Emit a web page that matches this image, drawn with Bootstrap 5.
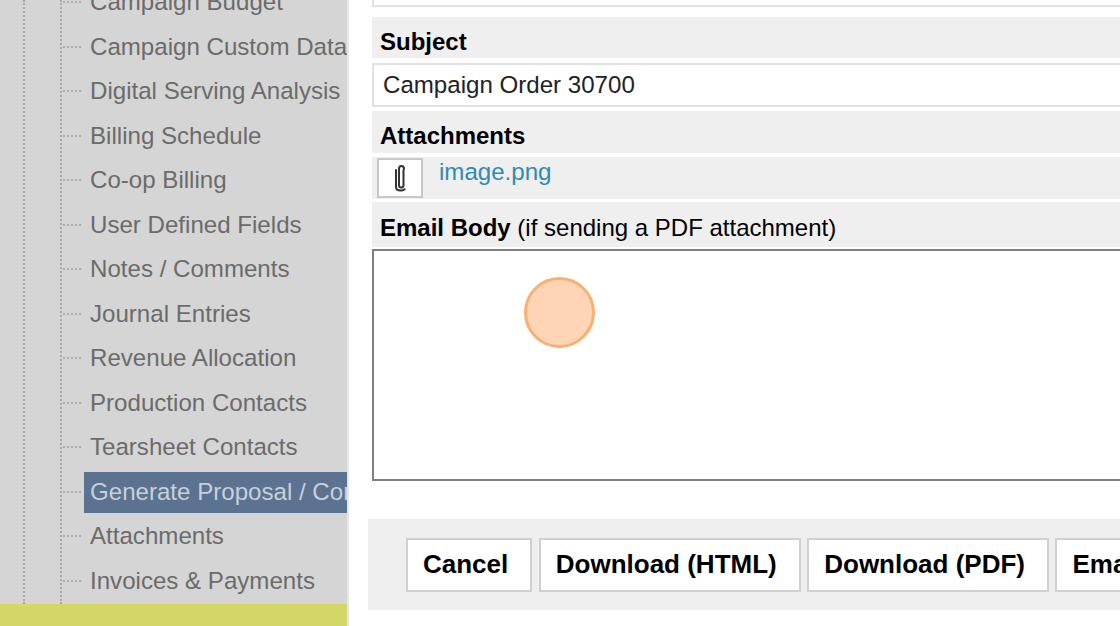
<!DOCTYPE html>
<html lang="en">
<head>
    <meta charset="UTF-8">
    <meta name="viewport" content="width=device-width, initial-scale=1.0">
    <title>Generate Proposal</title>
    <link href="https://cdn.jsdelivr.net/npm/bootstrap@5.3.2/dist/css/bootstrap.min.css" rel="stylesheet">
    <style>
        html, body { height: 626px; overflow: hidden; }
        body { font-family: "Liberation Sans", Arial, sans-serif; color: #222; background: #fff; }
        .page-wrap { width: 1120px; height: 626px; overflow: hidden; }
        .side-pane { width: 349px; flex: none; height: 626px; background: #d5d5d5; border-right: 2px solid #e6e6e6; overflow: hidden; }
        .tree-area { height: 604px; overflow: hidden; position: relative; }
        .tree-area::before, .tree-area::after { content: ""; position: absolute; top: 0; bottom: 0; border-left: 2px dotted #a8a8a8; }
        .tree-area::before { left: 23px; }
        .tree-area::after { left: 60px; }
        .tree-list { list-style: none; margin: -20px 0 0; padding: 0 0 0 84px; }
        .tree-item { height: 44.5px; position: relative; font-size: 24.1px; line-height: 44.5px; color: #6b6b6b; padding-left: 6px; white-space: nowrap; }
        .tree-item::before { content: ""; position: absolute; left: -21px; top: 21px; width: 18px; border-top: 2px dotted #adadad; }
        .tree-text { display: block; overflow: hidden; }
        .tree-item.is-active { color: #c7d0dc; padding-top: 2px; }
        .tree-item.is-active .tree-text { background: #5b7290; margin-left: -6px; padding-left: 6px; height: 41px; line-height: 39px; }
        .foot-strip { height: 22px; background: #d4d668; }
        .main-pane { padding-left: 19px; min-width: 0; position: relative; }
        .form-col { width: 900px; margin-left: 4px; margin-top: -38px; }
        .top-field { height: 45px; border: 2px solid #e2e2e2; background: #fff; }
        .label-bar { background: #efefef; color: #000; font-size: 24px; padding-left: 8px; line-height: 1; display: flex; align-items: center; }
        .label-bar b { font-weight: 700; }
        .bar-subject { height: 41px; margin-top: 10px; padding-top: 9px; }
        .bar-attach { height: 42px; margin-top: 4px; padding-top: 8px; }
        .bar-body { height: 45px; margin-top: 3px; padding-top: 6px; }
        .text-field { height: 44px; margin-top: 5px; border: 2px solid #e2e2e2; font-size: 24.1px; line-height: 40px; padding-left: 9px; color: #222; }
        .attach-row { height: 42px; margin-top: 4px; background: #efefef; padding: 1px 0 0 5px; }
        .clip-box { width: 46px; height: 40px; background: #fff; border: 2px solid #c8c8c8; padding-left: 2px; }
        .attach-link { font-size: 24.1px; line-height: 28px; color: #2f8ab8; margin-left: 16px; text-decoration: none; }
        .body-field { height: 232px; margin-top: 2px; border: 2px solid #7f7f7f; background: #fff; }
        .action-bar { margin-top: 38px; margin-left: -4px; width: 760px; height: 91px; background: #efefef; padding: 19px 0 0 38px; overflow: hidden; gap: 6.5px; }
        .act-btn { height: 54px; flex: none; background: #fff; border: 2px solid #d0d0d0; border-radius: 0; color: #000; font-size: 26px; font-weight: 700; padding: 0 22px 2px 15px; line-height: 48px; }
        .click-dot { position: absolute; left: 174.500px; top: 276.500px; width: 71px; height: 71px; border-radius: 50%; background: #ffd5b5; border: 3px solid #f8b073; }
    </style>
</head>
<body>
<div class="page-wrap d-flex">
    <aside class="side-pane d-flex flex-column">
        <div class="tree-area">
            <ul class="tree-list">
                <li class="tree-item"><span class="tree-text">Campaign Budget</span></li>
                <li class="tree-item"><span class="tree-text">Campaign Custom Data</span></li>
                <li class="tree-item"><span class="tree-text">Digital Serving Analysis</span></li>
                <li class="tree-item"><span class="tree-text">Billing Schedule</span></li>
                <li class="tree-item"><span class="tree-text">Co-op Billing</span></li>
                <li class="tree-item"><span class="tree-text">User Defined Fields</span></li>
                <li class="tree-item"><span class="tree-text">Notes / Comments</span></li>
                <li class="tree-item"><span class="tree-text">Journal Entries</span></li>
                <li class="tree-item"><span class="tree-text">Revenue Allocation</span></li>
                <li class="tree-item"><span class="tree-text">Production Contacts</span></li>
                <li class="tree-item"><span class="tree-text">Tearsheet Contacts</span></li>
                <li class="tree-item is-active"><span class="tree-text">Generate Proposal / Contract</span></li>
                <li class="tree-item"><span class="tree-text">Attachments</span></li>
                <li class="tree-item"><span class="tree-text">Invoices &amp; Payments</span></li>
            </ul>
        </div>
        <div class="foot-strip"></div>
    </aside>
    <main class="main-pane flex-grow-1">
        <div class="form-col">
            <div class="top-field"></div>
            <div class="label-bar bar-subject"><b>Subject</b></div>
            <div class="text-field">Campaign Order 30700</div>
            <div class="label-bar bar-attach"><b>Attachments</b></div>
            <div class="attach-row d-flex align-items-start">
                <div class="clip-box d-flex align-items-center justify-content-center">
                    <svg width="16" height="28" viewBox="0 0 16 28" fill="none" stroke="#333" stroke-width="2" stroke-linecap="round">
                        <path d="M10.500 6v15c0 1.600-.8 2.500-2.300 2.500S6 22.600 6 21V5c0-1.900.8-3 2.500-3s2.500 1.100 2.500 3"/>
                        <path d="M3 6v17c0 2 1.800 3.500 4.500 3.500 1.800 0 3.100-.4 4.200-1.300"/>
                    </svg>
                </div>
                <a class="attach-link" href="#">image.png</a>
            </div>
            <div class="label-bar bar-body"><span><b>Email Body</b> (if sending a PDF attachment)</span></div>
            <div class="body-field"></div>
            <div class="action-bar d-flex">
                <button class="act-btn" type="button">Cancel</button>
                <button class="act-btn" type="button">Download (HTML)</button>
                <button class="act-btn" type="button">Download (PDF)</button>
                <button class="act-btn" type="button">Email</button>
            </div>
        </div>
        <div class="click-dot"></div>
    </main>
</div>
<script src="https://cdn.jsdelivr.net/npm/bootstrap@5.3.2/dist/js/bootstrap.bundle.min.js"></script>
</body>
</html>
